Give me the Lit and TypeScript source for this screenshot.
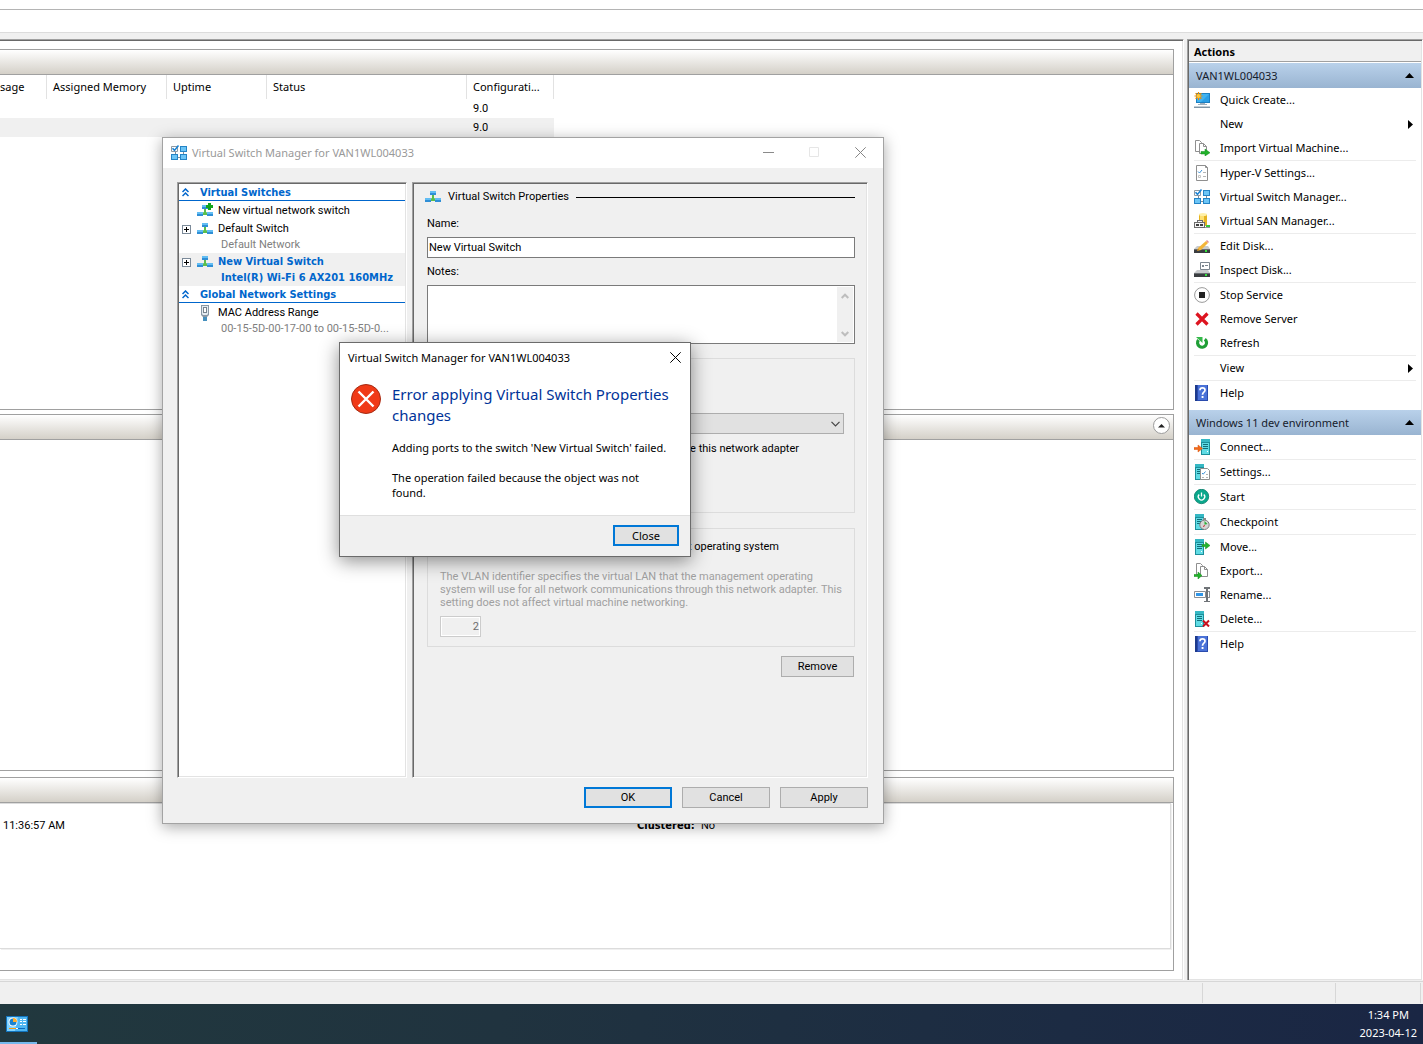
import { LitElement, html, svg, css, nothing, TemplateResult } from "lit";
import { customElement, property } from "lit/decorators.js";

const ui = css`
  :host {
    --ui: "Noto Sans", "Open Sans", sans-serif;
    --form: Roboto, "Liberation Sans", sans-serif;
    --strong: "DejaVu Sans Condensed", "DejaVu Sans", sans-serif;
    --face: #f0f0f0;
    --shadow: #a0a0a0;
    --dark: #696969;
    --light: #e3e3e3;
    --accent: #0078d7;
    --sunken: inset 1px 1px 0 #696969, inset -1px -1px 0 #e3e3e3;
    box-sizing: border-box;
  }
  *,
  *::before,
  *::after {
    box-sizing: border-box;
  }
  button,
  input,
  textarea,
  select {
    font: inherit;
    color: inherit;
    margin: 0;
    border-radius: 0;
  }
  button {
    padding: 0;
    border: 0;
    background: none;
    text-align: left;
  }
  svg {
    display: block;
    flex: none;
  }
  .push {
    height: 21px;
    border: 1px solid #adadad;
    background: #e1e1e1;
    text-align: center;
    line-height: 19px;
  }
  .push.primary {
    border: 2px solid var(--accent);
    line-height: 17px;
  }
`;

/* Shared pieces of the 16-unit icons */
const server = svg`
  <path fill="#1c8f9b" d="M1 0h9v16H1z"/><path fill="#36b8c4" d="M1 0h9v3H1z"/>
  <path fill="#5fdbe4" d="M2 4h7v11H2z"/><path fill="#0f6f7a" d="M3 5h5v1H3zM3 7h5v1H3zM3 9h5v1H3z"/>
  <path fill="#fff" d="M7 12h1v1H7z"/>`;
const pages = svg`
  <path fill="#fff" stroke="#8f8f8f" d="M1.5.5h4l2 2v9h-6z"/>
  <path fill="#fff" stroke="#8f8f8f" d="M5.5 3.500h4l3 3v7h-7z"/>
  <path fill="none" stroke="#8f8f8f" d="M9.500 3.500v3h3"/>`;
const disk = svg`
  <path fill="#c9cbcd" d="M3 8h11l2 3H0z"/><path fill="#3a3d40" d="M0 11h16v4H0z"/>
  <path fill="#6b6f73" d="M0 11h16v1H0z"/><path fill="#33e03c" d="M11 12h2v2h-2z"/>`;
const net = svg`
  <path fill="#5bbf4c" d="M7 6h2v3l2 1v2H5v-2l2-1z"/>
  <path fill="#2f8fd6" d="M5 2h6v4H5zM0 9h6v4H0zM10 9h6v4h-6z"/>
  <path fill="#62bdf3" d="M5 2h6v2H5zM0 9h6v2H0zM10 9h6v2h-6z"/>`;
const help = svg`
  <path fill="#2a4bad" d="M1 0h13v16H1z"/><path fill="#4a72d8" d="M4 0h9v15H4z"/><path fill="#1d3a8c" d="M1 0h2v16H1z"/>
  <path fill="none" stroke="#fff" stroke-width="1.700" d="M6 5.200C6 2.200 11 2.200 11 5.200C11 7.300 8.500 7.200 8.500 9.700"/><path fill="#fff" d="M7.600 11h1.900v2H7.600z"/>`;

const icons: Record<string, TemplateResult> = {
  quick: svg`
    <path fill="#1b7fc2" d="M2 1h14v10H2z"/><path fill="#3fb3f2" d="M3 2h12v8H3z"/><path fill="#2a9fe6" d="M15 2v8H7z"/>
    <path fill="#9fb0bd" d="M6 11h5v1H6zM4 12h9v1H4z"/><path fill="#7f95a5" d="M0 15h16v1H0z"/><path fill="#c3ced6" d="M0 14h16v1H0z"/>
    <path stroke="#f08c00" stroke-width="1.200" d="M4.500 0v8M.5 4h8M1.600 1.200l5.800 5.600M7.400 1.200L1.600 6.800"/><circle cx="4.500" cy="4" r="2" fill="#ffc83a"/>`,
  import: svg`${pages}<path fill="#22b32b" stroke="#128a1a" stroke-width=".5" d="M7 11.500h4V9l5 3.700-5 3.300v-2H7z"/>`,
  settings: svg`
    <path fill="#fff" stroke="#8f8f8f" d="M2.500.5h9l2 2v13h-11z"/><path fill="none" stroke="#8f8f8f" d="M11.500.5v2h2"/>
    <path fill="none" stroke="#3c92d8" d="M4 6.500l1.500 1.500L8 5"/><path fill="#b5b5b5" d="M9 7h3v1H9zM9 11h3v1H9z"/><path fill="none" stroke="#c5c5c5" d="M4.500 10.500h2v2h-2z"/>`,
  switch: svg`
    <path fill="#7d8d99" d="M4 7h1v3H4zM12 6h1v4h-1zM7 12h2v1H7z"/>
    <path fill="#fff" stroke="#8f9aa3" d="M.5 1.500h6v5h-6z"/>
    <path fill="#2484c6" d="M9 1h7v6H9zM0 9h7v6H0zM9 9h7v6H9z"/><path fill="#6cc5f6" d="M10 2h5v4h-5zM1 10h5v4H1zM10 10h5v4h-5z"/>
    <path fill="none" stroke="#1a83d4" stroke-width="1.600" d="M1.500 3.200l2 2.200L7.500.6"/>`,
  san: svg`
    <path fill="#e6b422" d="M5 1h8v12H5z"/><path fill="#ffe173" d="M6 1h4v11H6z"/><ellipse cx="9" cy="1.500" rx="4" ry="1.500" fill="#fff0a8"/>
    <path fill="#6c6c6c" d="M3 7h6v3H3zM0 9h11v6H0z"/><path fill="#f4f4f4" d="M4 8h4v1H4zM1 10h9v4H1z"/><path fill="#3f3f3f" d="M2 11h3v2H2zM6 11h3v2H6z"/>
    <path fill="#35c93d" d="M12 12h4v2h-4z"/><path fill="#999" d="M11 14h5v1h-5z"/>`,
  edit: svg`${disk}<path fill="#f3b53a" d="M12 3l2 2-7 7-4 1 1-3z"/><path fill="#e58d8d" d="M12 3l1-1 2 2-1 1z"/><path fill="#9a6a1c" d="M3 13l1-2 1 1z"/>`,
  inspect: svg`${disk}<path fill="#fff" stroke="#7c8790" d="M6.500.5h9v7h-9z"/><path fill="#7c8790" d="M8 3h2v2H8zM11 3h3v1h-3z"/>`,
  stop: svg`<circle cx="8" cy="8" r="7.400" fill="#fff" stroke="#9a9a9a"/><path fill="#222" d="M5 5h6v6H5z"/>`,
  remove: svg`<path stroke="#dd1420" stroke-width="3.200" d="M2.500 2.500l11 11M13.500 2.500l-11 11"/>`,
  refresh: svg`<path fill="none" stroke="#1f9e35" stroke-width="3.200" d="M10.800 4.200A4.500 4.500 0 1 1 4.500 5"/><path fill="#35b94a" d="M2 2h6.500v6z"/>`,
  help,
  connect: svg`<g transform="translate(6 0)">${server}</g><path fill="#f26a1b" stroke="#d9560c" stroke-width=".5" d="M0 8.500h4V6l4.500 3.500L4 13v-2.500H0z"/>`,
  vmset: svg`${server}<path fill="#fff" stroke="#8f8f8f" d="M6.500 4.500h7l2 2v9h-9z"/><path fill="none" stroke="#3c92d8" d="M8 9l1.200 1.200L11.500 7.500"/><path fill="#b5b5b5" d="M12 10h2v1h-2zM8 13h2v1H8zM12 13h2v1h-2z"/>`,
  start: svg`<circle cx="7.500" cy="7.500" r="7.200" fill="#0aa88c" stroke="#067a67" stroke-width=".8"/>
    <path fill="none" stroke="#fff" stroke-width="1.300" d="M5.200 5.500a3.200 3.200 0 1 0 4.600 0M7.500 3.500v4"/>`,
  checkpoint: svg`${server}<circle cx="10.500" cy="10.800" r="4.700" fill="#d5d5d5" stroke="#7d7d7d"/><path fill="#8b8b8b" d="M9 4h3v2H9z"/><path fill="#2eb03a" d="M10.500 10.800V7l3 3z"/><path stroke="#c23" d="M10.500 11l-1 2"/>`,
  move: svg`${server}<path fill="#22b32b" stroke="#128a1a" stroke-width=".5" d="M8 5.500h3.500V3L16 6.500 11.500 10V7.500H8z"/>`,
  export: svg`<g transform="translate(1 0)">${pages}</g><path fill="#22b32b" stroke="#128a1a" stroke-width=".5" d="M0 11.500h4V9l4 3.500L4 16v-2.500H0z"/>`,
  rename: svg`<path fill="#fff" stroke="#8a8f94" d="M.5 4.500h11v6H.5z"/><path fill="#fff" d="M14 4h2v7h-2z"/><path fill="#8a8f94" d="M13 4h3v1h-3zM13 10h3v1h-3zM15 4h1v7h-1z"/><path fill="#2f96e8" d="M2 6h7v3H2z"/><path fill="#6f7377" d="M10 0h6v2h-2v12h2v1h-6v-1h2V2h-2z"/>`,
  delete: svg`${server}<path stroke="#c80f1e" stroke-width="2" d="M9 9.500l6 6M15 9.500l-6 6"/>`,
  net,
  netnew: svg`${net}<path fill="#13a51c" d="M11 0h3v2h2v3h-2v2h-3V5H9V2h2z"/>`,
  mac: svg`<path fill="#8897a5" d="M4 0h8v10l-2 2H6l-2-2z"/><path fill="#e4ebf1" d="M5 1h6v8l-1 1H6L5 9z"/><path fill="#77838e" d="M6 2h4v6H6z"/><path fill="#fff" d="M7 3h2v4H7z"/><path fill="#4690be" d="M6 12h4v4H6z"/>`,
};

const icon = (name: string) =>
  html`<svg width="16" height="16" viewBox="0 0 16 16" aria-hidden="true">${icons[name]}</svg>`;

type Action = { label: string; icon?: string; sub?: boolean } | "-";

@customElement("action-group")
class ActionGroup extends LitElement {
  @property() heading = "";
  @property({ attribute: false }) items: Action[] = [];

  static styles = [
    ui,
    css`
      :host {
        display: block;
        font: 11px/24px var(--ui);
      }
      .head {
        display: flex;
        align-items: center;
        justify-content: space-between;
        width: 100%;
        height: 25px;
        padding: 0 7px;
        background: linear-gradient(#b9d1ea, #99b4d1);
        color: #16202c;
      }
      .rule {
        height: 1px;
        margin: 0 5px;
        background: #ececec;
      }
      .item {
        display: flex;
        align-items: center;
        gap: 10px;
        width: 100%;
        height: 24px;
        padding: 0 8px 0 5px;
      }
      .slot {
        width: 16px;
      }
      .label {
        flex: 1;
      }
    `,
  ];

  render() {
    return html`
      <button class="head">
        <span>${this.heading}</span>
        <svg width="9" height="5" viewBox="0 0 9 5"><path d="M0 5L4.500 0L9 5z" /></svg>
      </button>
      ${this.items.map((a) =>
        a === "-"
          ? html`<div class="rule"></div>`
          : html`<button class="item">
              <span class="slot">${a.icon ? icon(a.icon) : nothing}</span>
              <span class="label">${a.label}</span>
              ${a.sub
                ? html`<svg width="5" height="9" viewBox="0 0 5 9"><path d="M0 0L5 4.500L0 9z" /></svg>`
                : nothing}
            </button>`
      )}
    `;
  }
}

@customElement("switch-tree")
class SwitchTree extends LitElement {
  static styles = [
    ui,
    css`
      :host {
        display: block;
        width: 230px;
        flex: none;
        padding: 1px;
        border: 1px solid;
        border-color: var(--shadow) #fff #fff var(--shadow);
        background: #fff;
        box-shadow: var(--sunken);
        font: 11px/15px var(--form);
        overflow: hidden;
      }
      .head {
        display: flex;
        align-items: center;
        gap: 11px;
        width: 100%;
        height: 17px;
        padding: 1px 0 0 3px;
        border-bottom: 1px solid #0066cc;
        color: #0066cc;
        font: bold 11px/17px var(--strong);
      }
      .list {
        margin: 0;
        padding: 1px 0 0;
        list-style: none;
      }
      .node {
        display: grid;
        grid-template-columns: 9px 16px 1fr;
        column-gap: 6px;
        align-items: center;
        width: 100%;
        padding-left: 3px;
        white-space: nowrap;
      }
      .name {
        margin-left: -1px;
        line-height: 18px;
      }
      .sub {
        grid-column: 3;
        padding: 0 0 2px 2px;
        line-height: 13px;
        color: #808080;
      }
      .selected {
        background: var(--face);
        color: #0066cc;
        font-family: var(--strong);
        font-weight: bold;
      }
      .selected .sub {
        color: inherit;
      }
    `,
  ];

  private head(label: string) {
    return html`<button class="head">
      <svg width="7" height="9" viewBox="0 0 7 9" fill="none" stroke="#0066cc" stroke-width="1.500">
        <path d="M.5 4L3.500 1l3 3M.5 8L3.500 5l3 3" />
      </svg>
      <span>${label}</span>
    </button>`;
  }

  private node(name: string, glyph: string, sub = "", plus = false, selected = false) {
    return html`<li>
      <button class="node ${selected ? "selected" : ""}">
        ${plus
          ? html`<svg width="9" height="9" viewBox="0 0 9 9" shape-rendering="crispEdges">
              <path fill="#fff" stroke="#7b8a99" d="M.5.5h8v8h-8z" />
              <path stroke="#000" d="M2 4.500h5M4.500 2v5" />
            </svg>`
          : html`<span></span>`}
        ${icon(glyph)}<span class="name">${name}</span>
        ${sub ? html`<span class="sub">${sub}</span>` : nothing}
      </button>
    </li>`;
  }

  render() {
    return html`
      ${this.head("Virtual Switches")}
      <ul class="list">
        ${this.node("New virtual network switch", "netnew")}
        ${this.node("Default Switch", "net", "Default Network", true)}
        ${this.node("New Virtual Switch", "net", "Intel(R) Wi-Fi 6 AX201 160MHz", true, true)}
      </ul>
      ${this.head("Global Network Settings")}
      <ul class="list">
        ${this.node("MAC Address Range", "mac", "00-15-5D-00-17-00 to 00-15-5D-0...")}
      </ul>
    `;
  }
}

@customElement("switch-properties")
class SwitchProperties extends LitElement {
  static styles = [
    ui,
    css`
      :host {
        display: flex;
        flex-direction: column;
        flex: 1;
        min-width: 0;
        padding: 6px 12px 0 14px;
        border: 1px solid;
        border-color: var(--shadow) #fff #fff var(--shadow);
        box-shadow: var(--sunken);
        font: 11px/16px var(--form);
      }
      .title {
        display: flex;
        align-items: center;
        gap: 7px;
        height: 16px;
        margin-left: -2px;
      }
      .title .line {
        flex: 1;
        height: 1px;
        background: #000;
      }
      .field {
        display: block;
        margin-top: 11px;
      }
      .text {
        width: 100%;
        height: 21px;
        margin-top: 5px;
        padding: 0 1px;
        border: 1px solid #7a7a7a;
        background: #fff;
      }
      .field.notes {
        margin-top: 6px;
      }
      .memo {
        display: flex;
        height: 59px;
        margin-top: 5px;
        padding: 1px;
        border: 1px solid #7a7a7a;
        background: #fff;
      }
      .memo textarea {
        flex: 1;
        border: 0;
        resize: none;
        overflow: hidden;
        background: none;
      }
      .bar {
        display: flex;
        flex-direction: column;
        justify-content: space-between;
        align-items: center;
        width: 16px;
        padding: 6px 0 5px;
        background: var(--face);
      }
      .group {
        margin: 14px 0 0;
        border: 1px solid #dcdcdc;
      }
      .connection {
        height: 155px;
        padding: 54px 10px 0 28px;
      }
      .picker {
        position: relative;
      }
      .picker select {
        display: block;
        width: 100%;
        height: 21px;
        border: 1px solid #adadad;
        background: #e1e1e1;
        appearance: none;
      }
      .picker svg {
        position: absolute;
        right: 4px;
        top: 8px;
        pointer-events: none;
      }
      .check {
        display: flex;
        justify-content: flex-end;
        align-items: center;
        gap: 4px;
        white-space: nowrap;
      }
      .check input {
        width: 13px;
        height: 13px;
      }
      .share {
        margin: 7px 45px 0 0;
      }
      .vlan {
        height: 119px;
        margin-top: 15px;
        padding: 10px 12px 0;
      }
      .vlan .check {
        margin-right: 63px;
      }
      .hint {
        margin: 15px 0 7px;
        line-height: 13px;
        color: #a0a0a0;
        white-space: nowrap;
      }
      .number {
        display: block;
        width: 41px;
        height: 21px;
        padding: 0 1px;
        border: 1px solid #ccc;
        outline: 1px solid #fff;
        outline-offset: -2px;
        background: var(--face);
        color: #6d6d6d;
        text-align: right;
      }
      .remove {
        align-self: flex-end;
        width: 73px;
        margin: 9px 1px 0 0;
      }
    `,
  ];

  render() {
    return html`
      <div class="title">
        ${icon("net")}<span>Virtual Switch Properties</span><span class="line"></span>
      </div>
      <label class="field" for="name">Name:</label>
      <input class="text" id="name" type="text" value="New Virtual Switch" />
      <label class="field notes" for="notes">Notes:</label>
      <div class="memo">
        <textarea id="notes"></textarea>
        <span class="bar">
          <svg width="8" height="6" viewBox="0 0 8 6" fill="none" stroke="#bdbdbd" stroke-width="2"><path d="M.7 5L4 1.700L7.300 5" /></svg>
          <svg width="8" height="6" viewBox="0 0 8 6" fill="none" stroke="#bdbdbd" stroke-width="2"><path d="M.7 1L4 4.300L7.300 1" /></svg>
        </span>
      </div>
      <div class="group connection">
        <div class="picker">
          <select aria-label="Network adapter"></select>
          <svg width="9" height="6" viewBox="0 0 9 6" fill="none" stroke="#444" stroke-width="1.200"><path d="M.5.8l4 4 4-4" /></svg>
        </div>
        <label class="check share">
          <input type="checkbox" checked />Allow management operating system to share this network adapter
        </label>
      </div>
      <div class="group vlan">
        <label class="check">
          <input type="checkbox" />Enable virtual LAN identification for management operating system
        </label>
        <p class="hint">
          The VLAN identifier specifies the virtual LAN that the management operating<br />system
          will use for all network communications through this network adapter. This<br />setting
          does not affect virtual machine networking.
        </p>
        <input class="number" type="text" value="2" aria-label="VLAN identifier" disabled />
      </div>
      <button class="push remove">Remove</button>
    `;
  }
}

@customElement("manager-window")
class ManagerWindow extends LitElement {
  static styles = [
    ui,
    css`
      :host {
        display: flex;
        flex-direction: column;
        border: 1px solid #a3a3a3;
        background: var(--face);
        box-shadow: 0 3px 14px rgba(0, 0, 0, 0.34);
        font: 11px/16px var(--form);
      }
      .caption {
        display: flex;
        align-items: center;
        height: 30px;
        padding: 0 17px 1px 8px;
        background: #fff;
        color: #999;
        font: 11px/30px var(--ui);
      }
      .caption .name {
        flex: 1;
        margin-left: 5px;
      }
      .caption .tools {
        display: flex;
        gap: 35px;
      }
      .body {
        display: flex;
        flex: 1;
        gap: 5px;
        min-height: 0;
        padding: 14px 15px 0 14px;
      }
      .foot {
        display: flex;
        justify-content: flex-end;
        gap: 10px;
        padding: 9px 15px 15px;
      }
      .foot .push {
        width: 88px;
      }
    `,
  ];

  render() {
    return html`
      <div class="caption">
        ${icon("switch")}<span class="name">Virtual Switch Manager for VAN1WL004033</span>
        <span class="tools">
          <button aria-label="Minimize">
            <svg width="11" height="11" viewBox="0 0 11 11" stroke="#8a8a8a"><path d="M0 5.500h11" /></svg>
          </button>
          <button aria-label="Maximize" disabled>
            <svg width="11" height="11" viewBox="0 0 11 11" fill="none" stroke="#e6e6e6"><path d="M.5.5h9v9h-9z" /></svg>
          </button>
          <button aria-label="Close">
            <svg width="11" height="11" viewBox="0 0 11 11" stroke="#858585"><path d="M.3.3l10.400 10.400M10.700.3L.3 10.700" /></svg>
          </button>
        </span>
      </div>
      <div class="body">
        <switch-tree></switch-tree>
        <switch-properties></switch-properties>
      </div>
      <div class="foot">
        <button class="push primary">OK</button>
        <button class="push">Cancel</button>
        <button class="push">Apply</button>
      </div>
    `;
  }
}

@customElement("error-window")
class ErrorWindow extends LitElement {
  static styles = [
    ui,
    css`
      :host {
        display: flex;
        flex-direction: column;
        border: 1px solid #6b6b6b;
        background: #fff;
        box-shadow: 0 4px 18px rgba(0, 0, 0, 0.45);
        font: 11px/15px var(--ui);
      }
      .caption {
        display: flex;
        flex: none;
        justify-content: space-between;
        align-items: center;
        height: 29px;
        padding: 0 9px 0 8px;
      }
      .content {
        display: flex;
        flex: 1;
        gap: 11px;
        min-height: 0;
        padding: 12px 8px 0 11px;
      }
      .message {
        flex: 1;
      }
      .headline {
        margin: 0 0 14px;
        color: #003399;
        font: 15px/21px var(--ui);
      }
      .para {
        margin: 0 0 15px;
      }
      .foot {
        display: flex;
        flex: none;
        justify-content: flex-end;
        height: 41px;
        padding: 9px 11px;
        border-top: 1px solid #dfdfdf;
        background: var(--face);
      }
      .foot .push {
        width: 66px;
      }
    `,
  ];

  render() {
    return html`
      <div class="caption">
        <span>Virtual Switch Manager for VAN1WL004033</span>
        <button aria-label="Close">
          <svg width="11" height="11" viewBox="0 0 11 11" stroke="#000"><path d="M.3.3l10.400 10.400M10.700.3L.3 10.700" /></svg>
        </button>
      </div>
      <div class="content">
        <svg width="30" height="30" viewBox="0 0 30 30">
          <circle cx="15" cy="15" r="14.500" fill="#f03a17" stroke="#a52a12" />
          <path stroke="#fff" stroke-width="2.400" d="M7.500 7.500l15 15M22.500 7.500l-15 15" />
        </svg>
        <div class="message">
          <h1 class="headline">Error applying Virtual Switch Properties<br />changes</h1>
          <p class="para">Adding ports to the switch 'New Virtual Switch' failed.</p>
          <p class="para">The operation failed because the object was not<br />found.</p>
        </div>
      </div>
      <div class="foot"><button class="push primary">Close</button></div>
    `;
  }
}

const hostActions: Action[] = [
  { label: "Quick Create...", icon: "quick" },
  { label: "New", sub: true },
  { label: "Import Virtual Machine...", icon: "import" },
  "-",
  { label: "Hyper-V Settings...", icon: "settings" },
  { label: "Virtual Switch Manager...", icon: "switch" },
  { label: "Virtual SAN Manager...", icon: "san" },
  "-",
  { label: "Edit Disk...", icon: "edit" },
  { label: "Inspect Disk...", icon: "inspect" },
  "-",
  { label: "Stop Service", icon: "stop" },
  { label: "Remove Server", icon: "remove" },
  { label: "Refresh", icon: "refresh" },
  "-",
  { label: "View", sub: true },
  "-",
  { label: "Help", icon: "help" },
];

const machineActions: Action[] = [
  { label: "Connect...", icon: "connect" },
  "-",
  { label: "Settings...", icon: "vmset" },
  "-",
  { label: "Start", icon: "start" },
  "-",
  { label: "Checkpoint", icon: "checkpoint" },
  "-",
  { label: "Move...", icon: "move" },
  { label: "Export...", icon: "export" },
  { label: "Rename...", icon: "rename" },
  { label: "Delete...", icon: "delete" },
  "-",
  { label: "Help", icon: "help" },
];

@customElement("app-root")
class AppRoot extends LitElement {
  static styles = [
    ui,
    css`
      :host {
        position: relative;
        display: flex;
        flex-direction: column;
        min-height: 100vh;
        overflow: hidden;
        background: var(--face);
        color: #000;
        font: 11px/16px var(--ui);
      }
      .menu {
        height: 10px;
        background: #fff;
        border-bottom: 1px solid #b4b4b4;
      }
      .toolbar {
        height: 23px;
        background: #fff;
        border-bottom: 1px solid #dcdcdc;
      }
      .main {
        display: flex;
        flex: 1;
        gap: 3px;
        padding-top: 6px;
      }
      .center {
        display: grid;
        grid-template-rows: 361fr 4px 357fr 6px 194fr;
        flex: 1;
        min-width: 0;
        padding: 9px 9px 9px 0;
        background: #fff;
        border-top: 1px solid var(--shadow);
        border-right: 1px solid #fff;
        box-shadow: inset 0 1px 0 var(--dark), inset -1px -1px 0 var(--light);
      }
      .panel {
        display: flex;
        flex-direction: column;
        border: 1px solid var(--shadow);
        border-left: 0;
      }
      .panel:nth-child(2) {
        grid-row: 3;
      }
      .panel:nth-child(3) {
        grid-row: 5;
      }
      .band {
        display: flex;
        flex: none;
        justify-content: flex-end;
        align-items: center;
        height: 25px;
        padding: 0 3px 3px;
        border-bottom: 1px solid var(--shadow);
        background: linear-gradient(#fff, #d4d0c8);
      }
      .grid {
        align-self: flex-start;
        width: 554px;
        table-layout: fixed;
        border-collapse: separate;
        border-spacing: 0;
        line-height: 19px;
      }
      .grid th {
        height: 24px;
        padding: 0 0 1px 6px;
        border-right: 1px solid #e2e2e2;
        font-weight: normal;
        text-align: left;
        white-space: nowrap;
      }
      .grid th.cut {
        padding-left: 0;
      }
      .grid td {
        height: 19px;
        padding: 0 0 0 6px;
        font-family: var(--form);
      }
      .grid .picked td {
        background: var(--face);
      }
      .w0 {
        width: 47px;
      }
      .w1 {
        width: 120px;
      }
      .w2 {
        width: 100px;
      }
      .w3 {
        width: 200px;
      }
      .summary {
        display: grid;
        grid-template-columns: 634px 64px 1fr;
        align-items: start;
        flex: 1;
        margin: 0 2px 21px 0;
        padding: 14px 3px 0;
        border: 1px solid #dcdcdc;
        border-left: 0;
        box-shadow: 1px 1px 0 var(--face);
        font-family: var(--form);
      }
      .summary b {
        font-family: var(--strong);
      }
      .side {
        width: 236px;
        padding: 1px;
        background: #fff;
        border: 1px solid;
        border-color: var(--shadow) #fff #fff var(--shadow);
        border-bottom: 0;
        box-shadow: var(--sunken);
      }
      .side .title {
        height: 21px;
        margin: 0 0 1px;
        padding-left: 5px;
        border-bottom: 1px solid var(--shadow);
        background: var(--face);
        font: bold 11px/22px var(--ui);
      }
      .side .second {
        margin-top: 5px;
      }
      .status {
        display: flex;
        justify-content: flex-end;
        height: 23px;
        margin-top: 1px;
        padding: 1px 2px;
        border-top: 1px solid #d7d7d7;
      }
      .status span {
        border-right: 1px solid #d7d7d7;
      }
      .status .s1 {
        width: 134px;
        border-left: 1px solid #d7d7d7;
      }
      .status .s2 {
        width: 85px;
      }
      .taskbar {
        display: flex;
        justify-content: space-between;
        height: 40px;
        background: linear-gradient(90deg, #21383e, #20333f 35%, #1c2b43 75%, #1a2644);
        color: #fff;
      }
      .app {
        display: flex;
        align-items: center;
        width: 37px;
        padding: 2px 0 0 6px;
        border-bottom: 2px solid #76b9ed;
      }
      .clock {
        padding: 2px 6px;
        text-align: center;
        line-height: 18px;
      }
      manager-window {
        position: absolute;
        left: 162px;
        top: 137px;
        width: 722px;
        height: 687px;
      }
      error-window {
        position: absolute;
        left: 339px;
        top: 342px;
        width: 352px;
        height: 215px;
      }
    `,
  ];

  render() {
    return html`
      <div class="menu"></div>
      <div class="toolbar"></div>
      <div class="main">
        <main class="center">
          <section class="panel">
            <div class="band"></div>
            <table class="grid">
              <thead>
                <tr>
                  <th class="cut w0">sage</th>
                  <th class="w1">Assigned Memory</th>
                  <th class="w2">Uptime</th>
                  <th class="w3">Status</th>
                  <th>Configurati...</th>
                </tr>
              </thead>
              <tbody>
                <tr>
                  <td colspan="4"></td>
                  <td>9.0</td>
                </tr>
                <tr class="picked">
                  <td colspan="4"></td>
                  <td>9.0</td>
                </tr>
              </tbody>
            </table>
          </section>
          <section class="panel">
            <div class="band">
              <button aria-label="Collapse">
                <svg width="17" height="17" viewBox="0 0 17 17">
                  <circle cx="8.500" cy="8.500" r="8" fill="#fff" stroke="#9a9a9a" />
                  <path d="M5 10.500L8.500 7L12 10.500z" fill="#222" />
                </svg>
              </button>
            </div>
          </section>
          <section class="panel">
            <div class="band"></div>
            <div class="summary"><span>11:36:57 AM</span><b>Clustered:</b><span>No</span></div>
          </section>
        </main>
        <aside class="side">
          <h2 class="title">Actions</h2>
          <action-group heading="VAN1WL004033" .items=${hostActions}></action-group>
          <action-group
            class="second"
            heading="Windows 11 dev environment"
            .items=${machineActions}
          ></action-group>
        </aside>
      </div>
      <div class="status"><span class="s1"></span><span class="s2"></span></div>
      <footer class="taskbar">
        <button class="app" aria-label="Hyper-V Manager">
          <svg width="22" height="16" viewBox="0 0 22 16">
            <path fill="#1274bd" d="M0 0h22v16H0z" /><path fill="#7fd3ff" d="M1 1h20v14H1z" />
            <path fill="#4fb6f2" d="M12 1h9v14H9z" />
            <circle cx="7" cy="6" r="4.500" fill="#fff" /><circle cx="7" cy="6" r="3.500" fill="#1b83d0" />
            <path fill="#ffb02e" d="M7 6V2a4 4 0 0 1 4 4z" />
            <path fill="#fff" d="M14 3h2v1h-2zM17 3h3v1h-3zM14 5h2v1h-2zM17 5h3v1h-3zM14 8h2v1h-2zM17 8h3v1h-3zM10 12h2v1h-2z" />
            <path fill="#f39b13" d="M3 12h7v1H3z" /><path fill="#0b6cc0" d="M12 12h7v1h-7z" />
          </svg>
        </button>
        <div class="clock">1:34 PM<br />2023-04-12</div>
      </footer>
      <manager-window></manager-window>
      <error-window></error-window>
    `;
  }
}
